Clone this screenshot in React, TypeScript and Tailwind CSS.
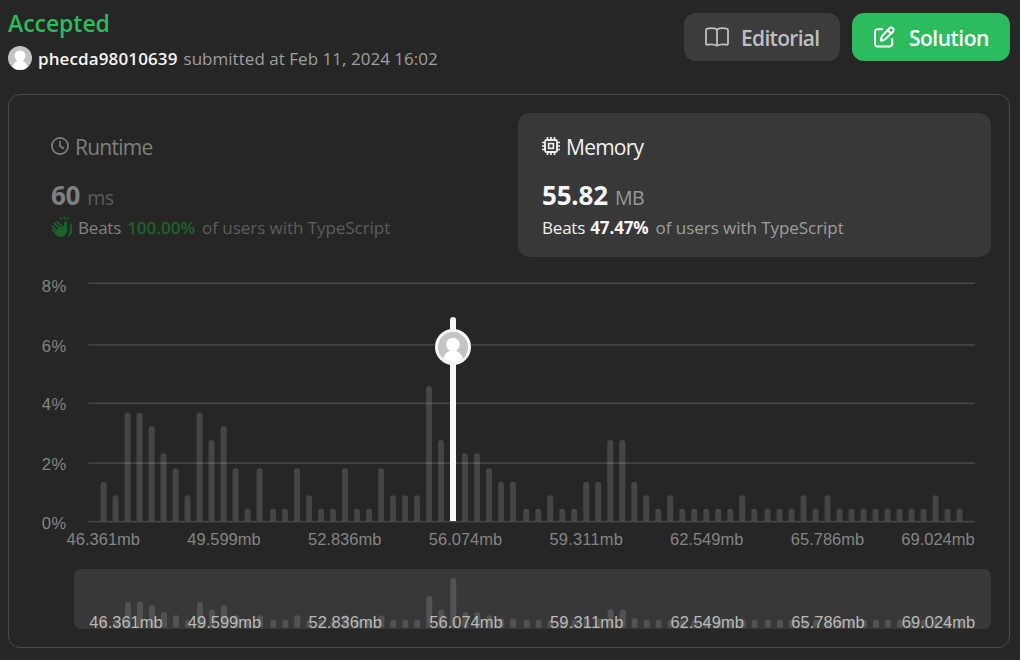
import React from "react";

const bars = [
  3, 2, 8, 8, 7, 5, 4, 2, 8, 6, 7, 4, 1, 4, 1, 1, 4, 2, 1, 1, 4, 1, 1, 4, 2, 2, 2, 10, 6, 15, 5, 5, 4, 3, 3, 1, 1, 2,
  1, 1, 3, 3, 6, 6, 3, 2, 1, 2, 1, 1, 1, 1, 1, 2, 1, 1, 1, 1, 2, 1, 2, 1, 1, 1, 1, 1, 1, 1, 1, 2, 1, 1,
];
const barTop: Record<number, number> = {
  1: 508.7, 2: 495.3, 3: 481.7, 4: 468.3, 5: 453.3, 6: 440, 7: 426, 8: 412.7, 10: 386, 15: 317,
};
const miniTop: Record<number, number> = {
  1: 619.7, 2: 619.7, 3: 618.3, 4: 615.3, 5: 612.3, 6: 609.3, 7: 605, 8: 601.7, 10: 596, 15: 578,
};
const barX = (i: number) => 100.6 + 12 * i + 1.33 * ((i >= 14 ? 1 : 0) + (i >= 35 ? 1 : 0) + (i >= 55 ? 1 : 0));

const grid: [number, number, string][] = [
  [283.3, 292, "8%"], [345, 352, "6%"], [403.4, 410, "4%"], [463.2, 470, "2%"], [521.7, 529, "0%"],
];
const ticks: [number, string][] = [
  [103.3, "46.361mb"], [224, "49.599mb"], [344.7, "52.836mb"], [465.5, "56.074mb"],
  [586.2, "59.311mb"], [706.7, "62.549mb"], [827.5, "65.786mb"], [938, "69.024mb"],
];
const AX = 9;
const AY = 273;

function column(x: number, top: number, bottom: number) {
  return `M${x} ${bottom}V${top + 3}a3 3 0 0 1 6 0V${bottom}Z`;
}

function Avatar({ className }: { className?: string }) {
  return (
    <svg viewBox="0 0 24 24" className={className}>
      <defs>
        <clipPath id="face"><circle cx="12" cy="12" r="12" /></clipPath>
      </defs>
      <g clipPath="url(#face)">
        <rect width="24" height="24" fill="#c4c4c4" />
        <circle cx="12" cy="10" r="5.5" fill="#fff" />
        <path d="M3.800 24c.2-5 3.400-9.500 8.200-9.500s8 4.500 8.200 9.500z" fill="#fff" />
      </g>
    </svg>
  );
}

function BookIcon() {
  return (
    <svg viewBox="0 0 26 26" className="mr-[11px] size-[26px]" fill="none" stroke="currentColor" strokeWidth="1.800" strokeLinejoin="round" strokeLinecap="round">
      <path d="M13 5.500C10.500 4.100 6.500 4 3.400 4.600Q2 4.900 2 6.300v13.200q0 1.500 1.500 1.200C6.500 20.100 10.500 20.200 13 21.700C15.500 20.200 19.500 20.100 22.500 20.700q1.500.300 1.500-1.200V6.300q0-1.400-1.400-1.700C19.500 4 15.500 4.100 13 5.500zM13 5.500v16" />
    </svg>
  );
}

function PenIcon() {
  return (
    <svg viewBox="0 0 24 24" className="mr-[12px] size-[24px]" fill="none" stroke="currentColor" strokeWidth="2" strokeLinejoin="round" strokeLinecap="round">
      <path d="M10 4.300H5.500a2.500 2.500 0 0 0-2.500 2.500V19a2.500 2.500 0 0 0 2.500 2.500h12.200a2.500 2.500 0 0 0 2.500-2.500v-5" />
      <path d="M8.800 15.700c0-2 .300-3.300 1.400-4.700l7.200-7.800a2.400 2.400 0 0 1 3.500 0 2.400 2.400 0 0 1 0 3.500l-7.500 7.300c-1.300 1.200-2.600 1.700-4.600 1.700zM15.800 5.200l3 3" />
    </svg>
  );
}

function ClockIcon() {
  return (
    <svg viewBox="0 0 18 18" className="mr-1.5 size-[18px]" fill="none" stroke="currentColor" strokeWidth="1.700" strokeLinecap="round" strokeLinejoin="round">
      <circle cx="9" cy="9" r="8.100" />
      <path d="M9 4.600V9l3.300 2.200" />
    </svg>
  );
}

function ChipIcon() {
  return (
    <svg viewBox="0 0 18 18" className="size-[18px]" fill="none" stroke="currentColor">
      <rect x="3" y="3" width="12" height="12" rx="1.500" strokeWidth="1.900" />
      <rect x="6.600" y="6.600" width="4.800" height="4.800" strokeWidth="1.600" />
      <path strokeWidth="1.700" d="M5.500 0v3M9 0v3M12.500 0v3M5.500 15v3M9 15v3M12.500 15v3M0 5.500h3M0 9h3M0 12.500h3M15 5.500h3M15 9h3M15 12.500h3" />
    </svg>
  );
}

function ClapIcon() {
  return (
    <svg viewBox="0 0 22 22" className="mt-0.5 size-[22px] text-[#1b622c]" fill="none" stroke="currentColor" strokeLinecap="round" strokeLinejoin="round">
      <g strokeWidth="1.800">
        <path d="M6.200 5.800l6 6M3.200 7.200l7 7M1.500 10.300l6.500 6.500M1.500 13.600l5 5" />
        <path d="M14.700 6.300q-.200 2.500.500 5" strokeWidth="2.200" />
      </g>
      <path fill="currentColor" stroke="none" d="M9 10.800l3.200.400 1.400-5 2.200 1c-.200 2 .600 3.700.600 6 0 3.800-2.600 7.600-6.600 7.600-2.400 0-4-1-5.500-2.900l.600-3z" />
      <path fill="currentColor" stroke="none" d="M18.800 8.300c.700-.600 1.900-.200 1.900.700 0 2 .800 3.500.500 6-.300 3.200-2.200 5.500-5.100 6 1.900-2 3-4.500 2.900-7.700z" />
      <path strokeWidth="1.200" d="M9.300 1.700l1 1.700M13.300.800v2.200M17.300 1.700l-1.200 1.700" />
    </svg>
  );
}

function Chart() {
  return (
    <svg width="1000" height="374" viewBox={`${AX} ${AY} 1000 374`} className="block shrink-0 font-['Liberation_Sans',Arial,sans-serif]">
      <defs>
        <clipPath id="brush"><rect x="74" y="569" width="917" height="60" rx="7" /></clipPath>
      </defs>
      {grid.map(([y, ty, label]) => (
        <g key={label}>
          <rect x="88.500" y={y - 0.8} width="886.500" height="1.500" fill="#484848" />
          <text x="41.800" y={ty} fontSize="16.600" textLength="24.500" fill="#848484">{label}</text>
        </g>
      ))}
      {bars.map((v, i) => (
        <path key={i} d={column(i === 29 ? 450 : barX(i), barTop[v], 521)} fill={i === 29 ? "#fafafa" : "#fff"} fillOpacity={i === 29 ? 1 : 0.145} />
      ))}
      {ticks.map(([x, label]) => (
        <text key={label} x={x} y="545" textAnchor="middle" fontSize="16.500" textLength="73.500" fill="#848484">{label}</text>
      ))}
      <circle cx="453" cy="347" r="18" fill="#f7f7f7" />
      <svg x="438" y="332" width="30" height="30" viewBox="0 0 24 24"><Avatar /></svg>
      <g clipPath="url(#brush)">
        <rect x="74" y="569" width="917" height="60" fill="#383838" />
        {bars.map((v, i) => (
          <path key={i} d={column(barX(i) + 0.400, miniTop[v], 627.500)} fill="#525252" />
        ))}
        {ticks.map(([x, label], i) => (
          <text key={label} x={i === 0 ? 126 : x + 0.500} y="628" textAnchor="middle" fontSize="16.500" textLength="73.500" fill="#bababa">{label}</text>
        ))}
      </g>
    </svg>
  );
}

export default function App() {
  return (
    <div className="flex h-[660px] w-[1020px] flex-col overflow-hidden bg-[#262626] pr-[10px] pl-2 font-['Open_Sans','Noto_Sans',sans-serif] whitespace-nowrap">
      <header className="flex h-[94px] shrink-0 justify-between">
        <div className="pt-2">
          <h1 className="text-[23px] leading-[30px] font-semibold tracking-[-0.05px] text-[#2cbb5d]">Accepted</h1>
          <div className="mt-2 flex h-6 items-center text-[17px]">
            <Avatar className="size-6" />
            <span className="ml-1.5 pt-px font-semibold tracking-[0.12px] text-[#f5f5f5]">phecda98010639</span>
            <span className="ml-1.5 pt-px tracking-[0.03px] text-[#9f9f9f]">submitted at Feb 11, 2024 16:02</span>
          </div>
        </div>
        <div className="flex gap-3 pt-[13px] text-[21px] font-semibold">
          <button className="flex h-12 w-[156px] items-center rounded-xl bg-[#3c3c3c] pl-5 text-[#bfbfc3]">
            <BookIcon /><span className="pt-[3px] tracking-[-0.7px]">Editorial</span>
          </button>
          <button className="flex h-12 w-[158px] items-center rounded-xl bg-[#2cbb5d] pl-5 text-white">
            <PenIcon /><span className="pt-[3px] pl-px tracking-[-0.5px]">Solution</span>
          </button>
        </div>
      </header>
      <main className="flex h-[554px] w-[1002px] shrink-0 flex-col rounded-xl border border-[#484848]">
        <div className="flex h-[178px] shrink-0 justify-between pt-[18px] pr-[18px] pl-[18px]">
          <section className="h-36 w-[473px] pt-[18px] pl-6">
            <div className="flex h-[30px] items-center text-[21px] tracking-[-0.75px] text-[#7f7f7f]">
              <ClockIcon /><span className="pt-[3px]">Runtime</span>
            </div>
            <div className="mt-[15px] flex h-[38px] items-baseline">
              <b className="text-[26px] font-bold tracking-[-0.3px] text-[#808080]">60</b>
              <span className="ml-[7px] text-[19.5px] leading-none tracking-[-0.4px] text-[#5c5c5c]">ms</span>
            </div>
            <div className="flex h-6 items-center text-[17px] text-[#5c5c5c]">
              <ClapIcon />
              <span className="ml-[5px] pt-[3px] tracking-[-0.2px] text-[#818181]">Beats</span>
              <span className="ml-1.5 pt-[3px] font-semibold text-[#1b622c]">100.00%</span>
              <span className="ml-[7px] pt-[3px] tracking-[-0.05px]">of users with TypeScript</span>
            </div>
          </section>
          <section className="h-36 w-[473px] rounded-xl bg-[#383838] pt-[18px] pl-6">
            <div className="flex h-[30px] items-center text-[21px] tracking-[-0.75px] text-[#f0f0f0]">
              <ChipIcon /><span className="ml-1.5 pt-[3px]">Memory</span>
            </div>
            <div className="mt-[15px] flex h-[38px] items-baseline">
              <b className="text-[26px] font-bold tracking-[-0.2px] text-[#f5f5f5]">55.82</b>
              <span className="ml-[7px] text-[19.5px] leading-none tracking-[-0.4px] text-[#999]">MB</span>
            </div>
            <div className="flex h-6 items-center text-[17px] text-[#9e9e9e]">
              <span className="pt-[3px] tracking-[-0.2px] text-[#f0f0f0]">Beats</span>
              <span className="ml-[5px] pt-[3px] font-bold tracking-[-0.1px] text-[#f5f5f5]">47.47%</span>
              <span className="ml-[7px] pt-[3px] tracking-[-0.05px]">of users with TypeScript</span>
            </div>
          </section>
        </div>
        <Chart />
      </main>
    </div>
  );
}
